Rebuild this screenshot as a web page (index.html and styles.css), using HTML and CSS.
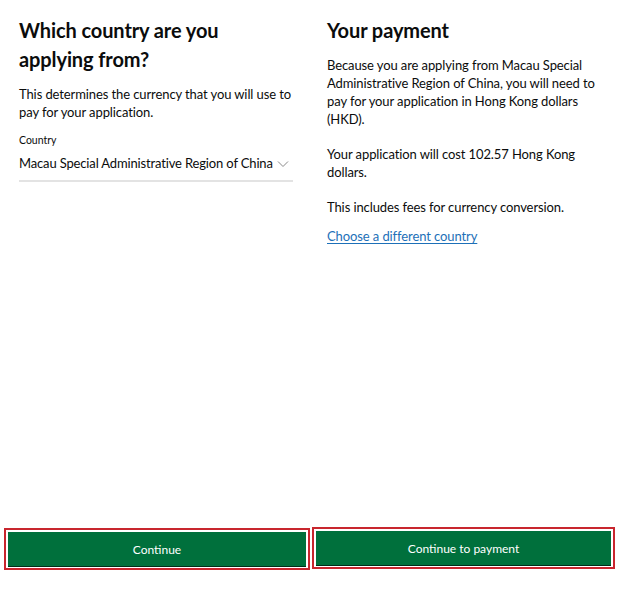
FILE: index.html
```html
<!DOCTYPE html>
<html lang="en">
<head>
<meta charset="utf-8">
<title>Country and payment</title>
<link rel="stylesheet" href="styles.css">
</head>
<body>
<div class="screens">
  <section class="screen screen-left">
    <div class="content">
      <h1 class="heading">Which country are you applying from?</h1>
      <p class="body">This determines the currency that you will use to pay for your application.</p>
      <div class="field">
        <div class="label">Country</div>
        <div class="select">
          <span class="select-value">Macau Special Administrative Region of China</span>
          <svg class="chevron" width="12" height="8" viewBox="0 0 12 8"><path d="M1 1.5 L6 6.5 L11 1.5" fill="none" stroke="#8a8a8a" stroke-width="1"/></svg>
        </div>
      </div>
    </div>
    <div class="btn-wrap btn-wrap-left">
      <button class="btn">Continue</button>
    </div>
  </section>
  <section class="screen screen-right">
    <div class="content">
      <h1 class="heading">Your payment</h1>
      <p class="body">Because you are applying from Macau Special Administrative Region of China, you will need to pay for your application in Hong Kong dollars (HKD).</p>
      <p class="body">Your application will cost 102.57 Hong Kong dollars.</p>
      <p class="body body-last">This includes fees for currency conversion.</p>
      <a class="link" href="#">Choose a different country</a>
    </div>
    <div class="btn-wrap btn-wrap-right">
      <button class="btn">Continue to payment</button>
    </div>
  </section>
</div>
</body>
</html>
```

FILE: styles.css
```css
* { box-sizing: border-box; }
html, body { margin: 0; padding: 0; background: #fff; }
body {
  font-family: Lato, "Liberation Sans", sans-serif;
  color: #0b0c0c;
  width: 620px;
  height: 590px;
  overflow: hidden;
}
.screens {
  display: flex;
  height: 590px;
}
.screen {
  display: flex;
  flex-direction: column;
  justify-content: space-between;
  height: 590px;
}
.screen-left { width: 310px; padding: 0 0 20px 4px; }
.screen-right { width: 310px; padding: 0 5px 21px 2px; }
.screen-left .content { padding: 16px 17px 0 15px; }
.screen-right .content { padding: 16px 10px 0 15px; }
.heading {
  margin: 0 0 11px 0;
  font-size: 20px;
  line-height: 29px;
  font-weight: 700;
  letter-spacing: -0.1px;
}
.body {
  margin: 0 0 17px 0;
  font-size: 13px;
  line-height: 18px;
  letter-spacing: -0.1px;
}
.body-last { margin-bottom: 9px; }
.field { margin-top: -5px; }
.label {
  font-size: 10.5px;
  line-height: 14px;
  margin-bottom: 7px;
}
.select {
  display: flex;
  align-items: center;
  gap: 4px;
  padding-bottom: 8px;
  border-bottom: 2px solid #e3e3e3;
  font-size: 13px;
  line-height: 18px;
  letter-spacing: -0.15px;
  white-space: nowrap;
}
.chevron { margin-top: 1px; flex: none; }
.link {
  font-size: 13px;
  line-height: 18px;
  letter-spacing: -0.1px;
  color: #1d70b8;
  text-decoration: underline;
  text-underline-offset: 2px;
  text-decoration-thickness: 1px;
}
.btn-wrap {
  border: 2px solid #c8262e;
  padding: 2px;
  height: 42px;
  display: flex;
}
.btn {
  flex: 1;
  background: #00703c;
  color: #fff;
  border: 0;
  font-family: inherit;
  font-size: 12px;
  box-shadow: 0 1px 0 #002d18;
}
```
